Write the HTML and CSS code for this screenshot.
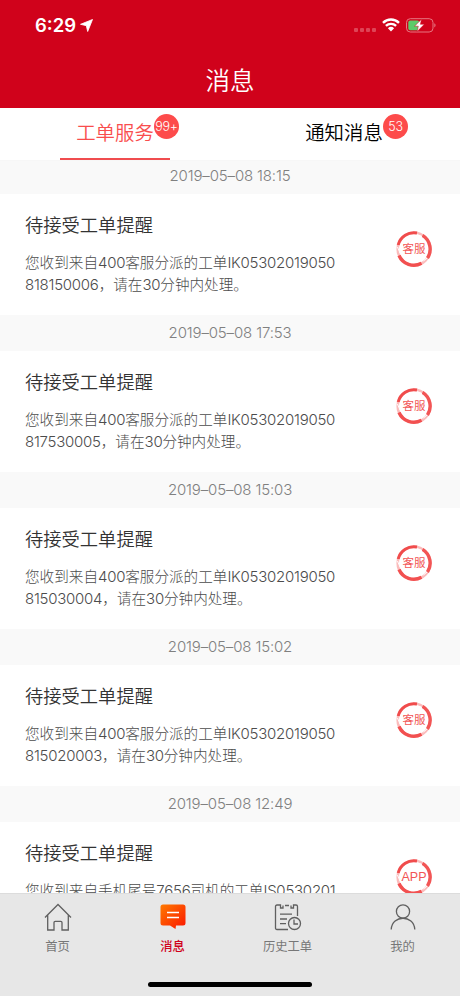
FILE: index.html
```html
<!DOCTYPE html>
<html lang="zh-CN">
	<head>
		<meta charset="UTF-8">
		<meta name="viewport" content="width=device-width, initial-scale=1">
		<title>消息</title>
		<link rel="stylesheet" href="styles.css">
	</head>
	<body>
		<svg class="defs">
			<defs>
				<linearGradient id="orange" x1="0" y1="0" x2="1" y2="1">
					<stop offset="0" stop-color="#ff7a00"/>
					<stop offset="1" stop-color="#fb1500"/>
				</linearGradient>
				<!--印章圆环-->
				<symbol id="ring" viewBox="0 0 36 36">
					<circle cx="18" cy="18" r="16.3" fill="none" stroke="#fbbcbc" stroke-width="2.600"/>
					<path d="M26.500 4.400A16.200 16.200 0 0 1 31.500 27" fill="none" stroke="#f25555" stroke-width="3.400"/>
					<path d="M25.500 32.300A16.200 16.200 0 0 1 3 24.500" fill="none" stroke="#f25050" stroke-width="3.400"/>
					<path d="M2.200 14A16.200 16.200 0 0 1 21 2" fill="none" stroke="#f04c4c" stroke-width="3"/>
					<path d="M1.500 16L4 22M21 3.800L26 5.500M27.500 30L31 27" fill="none" stroke="#fff" stroke-width="1"/>
				</symbol>
			</defs>
		</svg>
		<div class="page">
			<header>
				<div class="status">
					<span class="time">6:29</span>
					<svg class="arrow" width="13" height="13" viewBox="0 0 13 13"><path d="M12.500 .5L7.700 12.500L6.300 6.700L.5 5.300Z" fill="#fff" stroke="#fff" stroke-width=".8" stroke-linejoin="round"/></svg>
					<div class="dots"><i></i><i></i><i></i><i></i></div>
					<svg class="wifi" width="18" height="14" viewBox="0 0 18 14">
						<path d="M1 4.800A11.500 11.500 0 0 1 17 4.800M3.900 7.900A7.400 7.400 0 0 1 14.100 7.900" fill="none" stroke="#fff" stroke-width="2.400"/>
						<path d="M5.900 10.200A4.500 4.500 0 0 1 12.100 10.200L9 13.500Z" fill="#fff"/>
					</svg>
					<svg class="battery" width="31" height="15" viewBox="0 0 31 15">
						<rect x=".5" y=".7" width="26.500" height="13.300" rx="3.800" fill="none" stroke="#e77782"/>
						<path d="M28.300 5.300C30 6 30 8.700 28.300 9.400Z" fill="#e77782"/>
						<rect x="2.300" y="2.400" width="11" height="9.900" rx="2" fill="#5ccc69"/>
						<path d="M15.500 1.300L8.500 8.200H12.300L11.200 13.500L18.300 6.300H14.400Z" fill="#fff" stroke="#d0021b" stroke-width=".5"/>
					</svg>
				</div>
				<h1>消息</h1>
			</header>
			<nav class="tabs">
				<a class="active"><span>工单服务</span><em>99+</em></a>
				<a><span>通知消息</span><em>53</em></a>
			</nav>
			<main>
				<time>2019–05–08 18:15</time>
				<section>
					<div class="text">
						<h2>待接受工单提醒</h2>
						<p>您收到来自<b>400</b>客服分派的工单<b>IK05302019050</b><br><b>818150006</b>，请在<b>30</b>分钟内处理。</p>
					</div>
					<div class="stamp"><svg><use href="#ring"/></svg><span>客服</span></div>
				</section>
				<time>2019–05–08 17:53</time>
				<section>
					<div class="text">
						<h2>待接受工单提醒</h2>
						<p>您收到来自<b>400</b>客服分派的工单<b>IK05302019050</b><br><b>817530005</b>，请在<b>30</b>分钟内处理。</p>
					</div>
					<div class="stamp"><svg><use href="#ring"/></svg><span>客服</span></div>
				</section>
				<time>2019–05–08 15:03</time>
				<section>
					<div class="text">
						<h2>待接受工单提醒</h2>
						<p>您收到来自<b>400</b>客服分派的工单<b>IK05302019050</b><br><b>815030004</b>，请在<b>30</b>分钟内处理。</p>
					</div>
					<div class="stamp"><svg><use href="#ring"/></svg><span>客服</span></div>
				</section>
				<time>2019–05–08 15:02</time>
				<section>
					<div class="text">
						<h2>待接受工单提醒</h2>
						<p>您收到来自<b>400</b>客服分派的工单<b>IK05302019050</b><br><b>815020003</b>，请在<b>30</b>分钟内处理。</p>
					</div>
					<div class="stamp"><svg><use href="#ring"/></svg><span>客服</span></div>
				</section>
				<time>2019–05–08 12:49</time>
				<section>
					<div class="text">
						<h2>待接受工单提醒</h2>
						<p>您收到来自手机尾号<b>7656</b>司机的工单<b>IS0530201</b></p>
					</div>
					<div class="stamp app"><svg><use href="#ring"/></svg><span>APP</span></div>
				</section>
			</main>
			<footer>
				<div class="menu">
					<a>
						<svg width="30" height="30" viewBox="0 0 30 30"><path d="M2 15.500L15 2.500L28 15.500M4.700 13V28H11V20.500Q11 19.300 12.200 19.300H17.800Q19 19.300 19 20.500V28H25.300V13" /></svg>
						<span>首页</span>
					</a>
					<a class="active">
						<svg width="30" height="30" viewBox="0 0 30 30">
							<path class="bubble" d="M5 2.500H25Q27.500 2.500 27.500 5V21Q27.500 23.500 25 23.500H18L17.500 27L12 23.500H5Q2.500 23.500 2.500 21V5Q2.500 2.500 5 2.500Z"/>
							<path class="line" d="M9 10.500H21M9 15.500H21"/>
						</svg>
						<span>消息</span>
					</a>
					<a>
						<svg width="30" height="30" viewBox="0 0 30 30">
							<path d="M15 27.500H4Q2.500 27.500 2.500 26V4.500Q2.500 3 4 3H7.500V6H10V3.500M12 3.500H16M18 3.500V6H20.500V3H23Q24.500 3 24.500 4.500V14M10 6H7.500M7 12.200H19M7 17H14M7 21.700H13"/>
							<circle cx="21.500" cy="21.500" r="6"/><path d="M21 17.500V22H25"/>
						</svg>
						<span>历史工单</span>
					</a>
					<a>
						<svg width="30" height="30" viewBox="0 0 30 30"><circle cx="15" cy="9.500" r="6.600"/><path d="M3.200 27.500C4 12.500 26 12.500 26.800 27.500"/></svg>
						<span>我的</span>
					</a>
				</div>
				<div class="home"></div>
			</footer>
		</div>
	</body>
</html>
```

FILE: styles.css
```css
*{
	box-sizing: border-box;
	margin: 0;
	padding: 0;
}
body{
	font-family: Inter,"Noto Sans CJK SC",sans-serif;
	background: #fff;
}
i,em{
	font-style: normal;
}
.defs{
	display: block;
	width: 0;
	height: 0;
}
.page{
	display: flex;
	flex-direction: column;
	width: 460px;
	height: 996px;
	overflow: hidden;
}

header{
	flex: none;
	height: 108px;
	background: #d0021b;
	color: #fff;
}
.status{
	display: flex;
	align-items: center;
	height: 50px;
	padding: 0 23px 0 35px;
}
.time{
	font-size: 18.500px;
	font-weight: 600;
	line-height: 50px;
}
.arrow{
	margin-left: 4px;
}
.dots{
	display: flex;
	gap: 2px;
	margin: 9px 6px 0 auto;
}
.dots i{
	width: 4px;
	height: 4px;
	border-radius: 1px;
	background: #de4456;
}
.battery{
	margin-left: 6px;
}
h1{
	font-size: 24.500px;
	font-weight: 350;
	line-height: 62px;
	text-align: center;
}

/*标签切换*/
.tabs{
	position: relative;
	z-index: 1;
	flex: none;
	display: flex;
	justify-content: space-between;
	height: 53px;
	padding: 0 51px 0 60px;
	background: #fff;
	border-bottom: 1px solid #f7f7f7;
}
.tabs a{
	position: relative;
	width: 110px;
	height: 52px;
	font-size: 19.400px;
	font-weight: 350;
	line-height: 50px;
	text-align: center;
	color: #000;
}
.tabs a:nth-of-type(2){
	width: 130px;
}
.tabs a.active{
	color: #f94d4d;
	border-bottom: 2px solid #f04c4f;
}
.tabs em{
	position: absolute;
	left: 94px;
	top: 6px;
	width: 25px;
	height: 25px;
	border-radius: 50%;
	background: #fd4b4b;
	font-size: 12.500px;
	font-weight: 300;
	line-height: 25px;
	letter-spacing: -.3px;
	color: #fff;
}
.tabs a:nth-of-type(2) em{
	left: 104px;
}

/*消息列表*/
main{
	flex: 1;
	min-height: 0;
	margin-top: -3px;
	overflow: hidden;
}
time{
	display: block;
	height: 36px;
	background: #f9f9f9;
	font-size: 15px;
	font-weight: 300;
	line-height: 35px;
	letter-spacing: -.15px;
	text-align: center;
	color: #808080;
}
section{
	display: flex;
	justify-content: space-between;
	height: 121px;
	padding: 17px 28px 0 25px;
}
h2{
	font-size: 18.300px;
	font-weight: 350;
	line-height: 28px;
	color: #333;
}
.text p{
	margin-top: 13px;
	font-size: 14.600px;
	font-weight: 300;
	line-height: 22px;
	white-space: nowrap;
	color: #4c4c4c;
}
.text b{
	font-size: 15px;
	font-weight: 300;
	letter-spacing: -.25px;
}
.stamp{
	position: relative;
	width: 36px;
	height: 36px;
	margin-top: 20px;
}
.stamp svg{
	display: block;
	width: 36px;
	height: 36px;
}
.stamp span{
	position: absolute;
	left: 0;
	top: 0;
	width: 36px;
	font-size: 11.500px;
	line-height: 37px;
	text-align: center;
	color: #f25555;
}
.stamp.app span{
	font-family: "Liberation Sans",sans-serif;
	font-size: 12.500px;
	line-height: 36px;
}

/*底部导航*/
footer{
	flex: none;
	height: 103px;
	background: #e7e7e7;
	border-top: 1px solid #dcdcdc;
}
.menu{
	display: grid;
	grid-template-columns: repeat(4,1fr);
	height: 88px;
}
.menu a{
	display: flex;
	flex-direction: column;
	align-items: center;
	padding-top: 8px;
	font-size: 12.300px;
	line-height: 18px;
	color: #777;
}
.menu svg{
	margin-bottom: 6px;
	fill: none;
	stroke: #606060;
	stroke-width: 1.300;
}
.menu .bubble{
	fill: url(#orange);
	stroke: none;
}
.menu .line{
	stroke: #fff;
}
.menu a.active{
	color: #d0021b;
	font-weight: 500;
}
.home{
	width: 164px;
	height: 5px;
	margin: 0 auto;
	border-radius: 3px;
	background: #000;
}
```
